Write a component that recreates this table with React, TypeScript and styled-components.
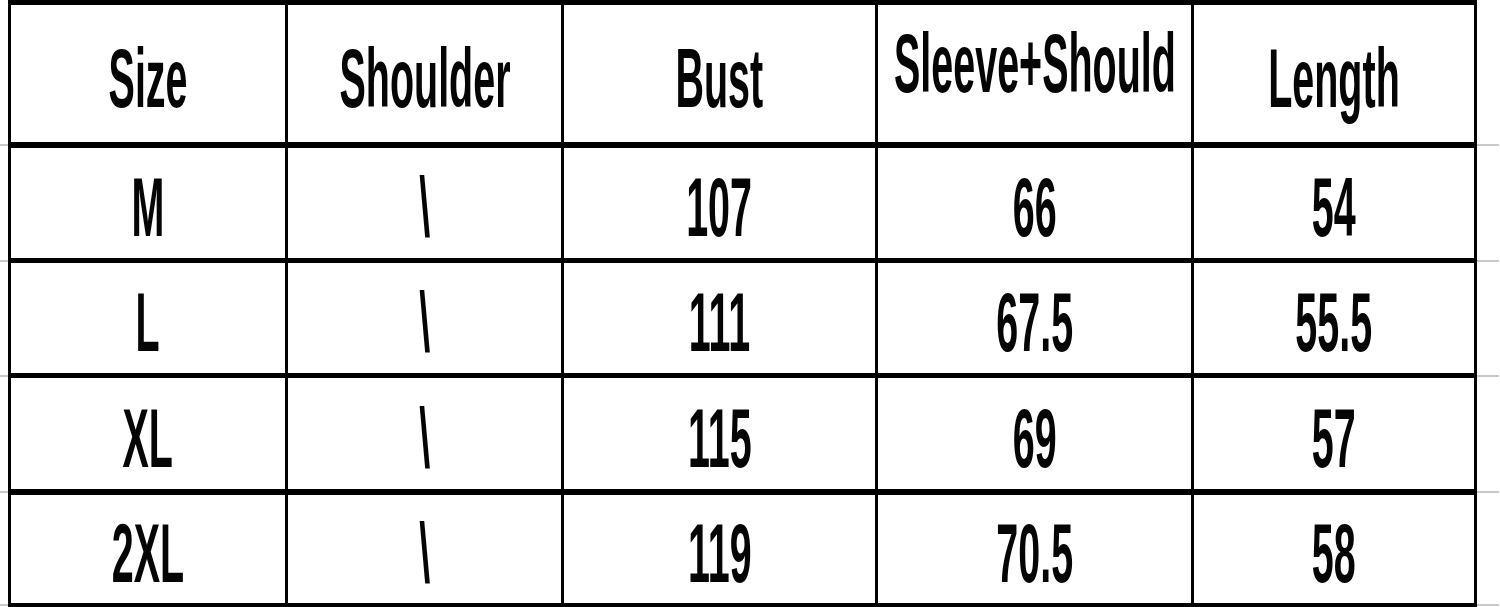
import * as React from 'react';
import { createGlobalStyle, styled } from 'styled-components';

const GlobalStyle = createGlobalStyle`
  html, body {
    margin: 0;
    padding: 0;
    background: #ffffff;
  }
  body {
    width: 1500px;
    height: 607px;
    overflow: hidden;
    font-family: 'Liberation Sans', Arial, sans-serif;
  }
`;

const Sheet = styled.div`
  width: 1469px;
  margin-left: 8px;
  border-top: 5px solid #000;
  border-left: 3px solid #000;
  border-right: 3px solid #000;
  box-sizing: border-box;
  display: flex;
  flex-direction: column;
`;

const Row = styled.div<{ $height: number; $line: number }>`
  position: relative;
  display: grid;
  grid-template-columns: 274px 276px 314px 316px 283px;
  height: ${(p) => p.$height}px;
  border-bottom: ${(p) => p.$line}px solid #000;

  /* faint scan marks that run past the table edges */
  &::before,
  &::after {
    content: '';
    position: absolute;
    bottom: -${(p) => Math.ceil(p.$line / 2) + 1}px;
    height: 2px;
    background: #c9c9c9;
  }
  &::before {
    left: -11px;
    width: 8px;
  }
  &::after {
    right: -25px;
    width: 22px;
  }
`;

const Cell = styled.div<{ $top?: boolean }>`
  display: flex;
  align-items: center;
  justify-content: center;
  min-width: 0;
  overflow: hidden;
  box-sizing: border-box;
  padding: ${(p) => (p.$top ? '0 0 22px' : '8px 0 0')};

  & + & {
    border-left: 3px solid #000;
  }
`;

const Label = styled.span`
  display: inline-block;
  white-space: nowrap;
  font-family: 'Liberation Sans', Arial, sans-serif;
  font-weight: 700;
  font-size: 84px;
  line-height: 1;
  color: #050505;
  transform: scaleX(0.47);
  transform-origin: center;
`;

const header = ['Size', 'Shoulder', 'Bust', 'Sleeve+Should', 'Length'];

const rows = [
  ['M', '\\', '107', '66', '54'],
  ['L', '\\', '111', '67.5', '55.5'],
  ['XL', '\\', '115', '69', '57'],
  ['2XL', '\\', '119', '70.5', '58'],
];

const rowBoxes = [
  { height: 110, line: 5 },
  { height: 110, line: 5 },
  { height: 111, line: 6 },
  { height: 108, line: 4 },
];

export default function App() {
  return (
    <>
      <GlobalStyle />
      <Sheet>
        <Row $height={137} $line={6}>
          {header.map((h) => (
            <Cell key={h} $top={h === 'Sleeve+Should'}>
              <Label>{h}</Label>
            </Cell>
          ))}
        </Row>
        {rows.map((r, i) => (
          <Row key={r[0]} $height={rowBoxes[i].height} $line={rowBoxes[i].line}>
            {r.map((v, j) => (
              <Cell key={j}>
                <Label>{v}</Label>
              </Cell>
            ))}
          </Row>
        ))}
      </Sheet>
    </>
  );
}
